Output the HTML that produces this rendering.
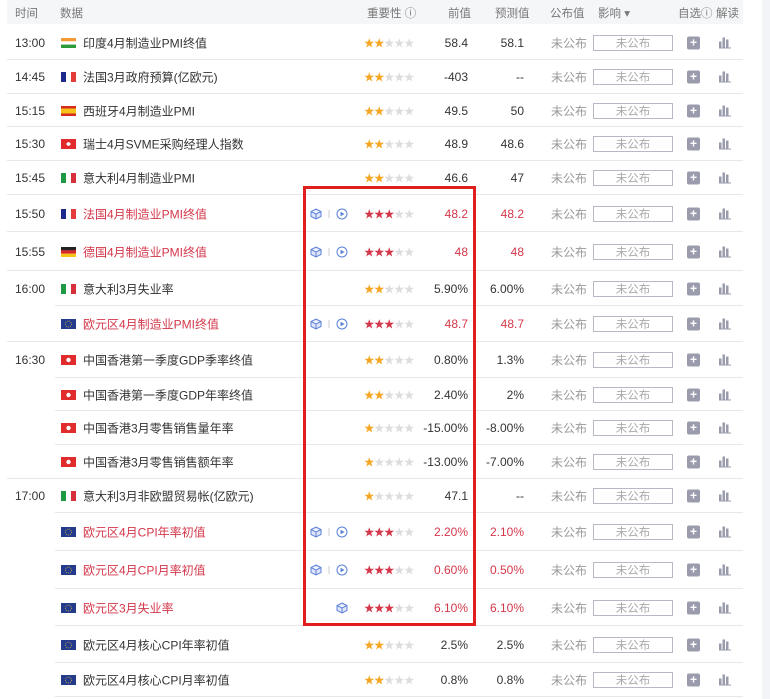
<!DOCTYPE html><html><head><meta charset="utf-8"><style>
*{margin:0;padding:0;box-sizing:border-box}
body{width:770px;height:699px;overflow:hidden;background:#fff;font-family:"Liberation Sans","Noto Sans CJK SC",sans-serif;font-size:12px;color:#333;position:relative}
.strip{position:absolute;left:762px;top:0;width:8px;height:699px;background:#f3f4f7}
.hd{position:absolute;left:7px;top:0;width:736px;height:24px;background:#f5f6f8;color:#777;font-size:11.5px}
.hd span{position:absolute;top:5px}
.r{position:absolute;left:0;width:743px}
.r .ln{position:absolute;bottom:0;right:0;height:1px;background:#e8e8ec}
.c{position:absolute;top:50%;transform:translateY(-50%);white-space:nowrap}
.t{left:15px}
.f{left:61px;width:15px;height:10px}
.n{left:83px}
.red{color:#d4374a}
.st{left:364px;font-size:10.5px;letter-spacing:-0.5px;color:#ddd}
.st b{font-weight:normal;color:#f5a623}
.st i{font-style:normal;color:#d4374a}
.p{right:275px;text-align:right}
.fc{right:219px;text-align:right}
.pub{left:551px;color:#999}
.bx{left:593px;width:80px;height:16px;border:1px solid #b8b9c4;color:#aaa;font-size:11.5px}
.bx span{position:absolute;left:0;right:0;top:2px;text-align:center;line-height:12px}
.pl{left:687px;width:13px;height:13px;background:#9a9cae;border-radius:2px;color:#fff;font-size:12px;line-height:13px;text-align:center;font-weight:bold}
.ch{left:719px;width:12px;height:11px}
.ic{left:310px;width:40px;height:12px}
.box{position:absolute;left:303px;top:186px;width:173px;height:440px;border:3px solid #e01e1e}
</style></head><body>
<div class="strip"></div>
<div class="hd"><span style="left:8px">时间</span><span style="left:53px">数据</span><span style="left:360px">重要性 ⓘ</span><span style="left:441px">前值</span><span style="left:488px">预测值</span><span style="left:543px">公布值</span><span style="left:591px">影响 ▾</span><span style="left:671px">自选ⓘ</span><span style="left:709px">解读</span></div>

<svg width="0" height="0" style="position:absolute"><defs>
<symbol id="ch" viewBox="0 0 12 11"><rect x="0" y="4" width="2.5" height="7" fill="#9a9cae"/><rect x="3.5" y="0" width="2.5" height="11" fill="#9a9cae"/><rect x="7" y="2" width="2.5" height="9" fill="#9a9cae"/><rect x="0" y="10" width="12" height="1" fill="#9a9cae"/></symbol>
<symbol id="ic" viewBox="0 0 40 12"><path d="M6 1 L11 3.5 V8.5 L6 11 L1 8.5 V3.5 Z M1 3.5 L6 6 L11 3.5 M6 6 V11" fill="#dfe6fb" stroke="#5b7fd8" stroke-width="1"/><line x1="19" y1="2" x2="19" y2="10" stroke="#ccc"/><circle cx="32" cy="6" r="5" fill="none" stroke="#5b7fd8"/><path d="M30.5 3.8 L34.5 6 L30.5 8.2Z" fill="#5b7fd8"/></symbol>
<symbol id="in" viewBox="0 0 15 10"><rect width="15" height="3.4" fill="#f39a35"/><rect y="3.3" width="15" height="3.4" fill="#fff"/><rect y="6.6" width="15" height="3.4" fill="#2e9a3a"/></symbol>
<symbol id="fr" viewBox="0 0 15 10"><rect width="5" height="10" fill="#1d2a8c"/><rect x="5" width="5" height="10" fill="#fff"/><rect x="10" width="5" height="10" fill="#e43b3b"/></symbol>
<symbol id="es" viewBox="0 0 15 10"><rect width="15" height="10" fill="#d52b1e"/><rect y="2.5" width="15" height="5" fill="#f7c21b"/></symbol>
<symbol id="ch2" viewBox="0 0 15 10"><rect width="15" height="10" fill="#e02c2c"/><path d="M6.5 3H8.5V4H9.5V6H8.5V7H6.5V6H5.5V4H6.5Z" fill="#fff"/></symbol>
<symbol id="it" viewBox="0 0 15 10"><rect width="5" height="10" fill="#1f9a44"/><rect x="5" width="5" height="10" fill="#fff"/><rect x="10" width="5" height="10" fill="#d8303a"/></symbol>
<symbol id="de" viewBox="0 0 15 10"><rect width="15" height="3.4" fill="#222"/><rect y="3.3" width="15" height="3.4" fill="#d8262d"/><rect y="6.6" width="15" height="3.4" fill="#f5c518"/></symbol>
<symbol id="eu" viewBox="0 0 15 10"><rect width="15" height="10" fill="#243a8c"/><circle cx="7.5" cy="5" r="3" fill="none" stroke="#e8c33a" stroke-width=".7" stroke-dasharray="1 1"/></symbol>
<symbol id="hk" viewBox="0 0 15 10"><rect width="15" height="10" fill="#e02c2c"/><circle cx="7.5" cy="5" r="2.2" fill="#fff"/></symbol>
</defs></svg>

<div class="r" style="top:26px;height:34px"><span class="c t">13:00</span><svg class="c f"><use href="#in"/></svg><span class="c n">印度4月制造业PMI终值</span><span class="c st"><b>★★</b>★★★</span><span class="c p">58.4</span><span class="c fc">58.1</span><span class="c pub">未公布</span><span class="c bx"><span>未公布</span></span><span class="c pl">+</span><svg class="c ch"><use href="#ch"/></svg><div class="ln" style="left:7px"></div></div>
<div class="r" style="top:60px;height:34px"><span class="c t">14:45</span><svg class="c f"><use href="#fr"/></svg><span class="c n">法国3月政府预算(亿欧元)</span><span class="c st"><b>★★</b>★★★</span><span class="c p">-403</span><span class="c fc">--</span><span class="c pub">未公布</span><span class="c bx"><span>未公布</span></span><span class="c pl">+</span><svg class="c ch"><use href="#ch"/></svg><div class="ln" style="left:7px"></div></div>
<div class="r" style="top:94px;height:33px"><span class="c t">15:15</span><svg class="c f"><use href="#es"/></svg><span class="c n">西班牙4月制造业PMI</span><span class="c st"><b>★★</b>★★★</span><span class="c p">49.5</span><span class="c fc">50</span><span class="c pub">未公布</span><span class="c bx"><span>未公布</span></span><span class="c pl">+</span><svg class="c ch"><use href="#ch"/></svg><div class="ln" style="left:7px"></div></div>
<div class="r" style="top:127px;height:34px"><span class="c t">15:30</span><svg class="c f"><use href="#ch2"/></svg><span class="c n">瑞士4月SVME采购经理人指数</span><span class="c st"><b>★★</b>★★★</span><span class="c p">48.9</span><span class="c fc">48.6</span><span class="c pub">未公布</span><span class="c bx"><span>未公布</span></span><span class="c pl">+</span><svg class="c ch"><use href="#ch"/></svg><div class="ln" style="left:7px"></div></div>
<div class="r" style="top:161px;height:34px"><span class="c t">15:45</span><svg class="c f"><use href="#it"/></svg><span class="c n">意大利4月制造业PMI</span><span class="c st"><b>★★</b>★★★</span><span class="c p">46.6</span><span class="c fc">47</span><span class="c pub">未公布</span><span class="c bx"><span>未公布</span></span><span class="c pl">+</span><svg class="c ch"><use href="#ch"/></svg><div class="ln" style="left:7px"></div></div>
<div class="r" style="top:195px;height:37px"><span class="c t">15:50</span><svg class="c f"><use href="#fr"/></svg><span class="c n red">法国4月制造业PMI终值</span><svg class="c ic"><use href="#ic"/></svg><span class="c st"><i>★★★</i>★★</span><span class="c p red">48.2</span><span class="c fc red">48.2</span><span class="c pub">未公布</span><span class="c bx"><span>未公布</span></span><span class="c pl">+</span><svg class="c ch"><use href="#ch"/></svg><div class="ln" style="left:7px"></div></div>
<div class="r" style="top:232px;height:39px"><span class="c t">15:55</span><svg class="c f"><use href="#de"/></svg><span class="c n red">德国4月制造业PMI终值</span><svg class="c ic"><use href="#ic"/></svg><span class="c st"><i>★★★</i>★★</span><span class="c p red">48</span><span class="c fc red">48</span><span class="c pub">未公布</span><span class="c bx"><span>未公布</span></span><span class="c pl">+</span><svg class="c ch"><use href="#ch"/></svg><div class="ln" style="left:7px"></div></div>
<div class="r" style="top:271px;height:35px"><span class="c t">16:00</span><svg class="c f"><use href="#it"/></svg><span class="c n">意大利3月失业率</span><span class="c st"><b>★★</b>★★★</span><span class="c p">5.90%</span><span class="c fc">6.00%</span><span class="c pub">未公布</span><span class="c bx"><span>未公布</span></span><span class="c pl">+</span><svg class="c ch"><use href="#ch"/></svg><div class="ln" style="left:55px"></div></div>
<div class="r" style="top:306px;height:36px"><svg class="c f"><use href="#eu"/></svg><span class="c n red">欧元区4月制造业PMI终值</span><svg class="c ic"><use href="#ic"/></svg><span class="c st"><i>★★★</i>★★</span><span class="c p red">48.7</span><span class="c fc red">48.7</span><span class="c pub">未公布</span><span class="c bx"><span>未公布</span></span><span class="c pl">+</span><svg class="c ch"><use href="#ch"/></svg><div class="ln" style="left:7px"></div></div>
<div class="r" style="top:342px;height:36px"><span class="c t">16:30</span><svg class="c f"><use href="#hk"/></svg><span class="c n">中国香港第一季度GDP季率终值</span><span class="c st"><b>★★</b>★★★</span><span class="c p">0.80%</span><span class="c fc">1.3%</span><span class="c pub">未公布</span><span class="c bx"><span>未公布</span></span><span class="c pl">+</span><svg class="c ch"><use href="#ch"/></svg><div class="ln" style="left:55px"></div></div>
<div class="r" style="top:378px;height:33px"><svg class="c f"><use href="#hk"/></svg><span class="c n">中国香港第一季度GDP年率终值</span><span class="c st"><b>★★</b>★★★</span><span class="c p">2.40%</span><span class="c fc">2%</span><span class="c pub">未公布</span><span class="c bx"><span>未公布</span></span><span class="c pl">+</span><svg class="c ch"><use href="#ch"/></svg><div class="ln" style="left:55px"></div></div>
<div class="r" style="top:411px;height:34px"><svg class="c f"><use href="#hk"/></svg><span class="c n">中国香港3月零售销售量年率</span><span class="c st"><b>★</b>★★★★</span><span class="c p">-15.00%</span><span class="c fc">-8.00%</span><span class="c pub">未公布</span><span class="c bx"><span>未公布</span></span><span class="c pl">+</span><svg class="c ch"><use href="#ch"/></svg><div class="ln" style="left:55px"></div></div>
<div class="r" style="top:445px;height:34px"><svg class="c f"><use href="#hk"/></svg><span class="c n">中国香港3月零售销售额年率</span><span class="c st"><b>★</b>★★★★</span><span class="c p">-13.00%</span><span class="c fc">-7.00%</span><span class="c pub">未公布</span><span class="c bx"><span>未公布</span></span><span class="c pl">+</span><svg class="c ch"><use href="#ch"/></svg><div class="ln" style="left:7px"></div></div>
<div class="r" style="top:479px;height:34px"><span class="c t">17:00</span><svg class="c f"><use href="#it"/></svg><span class="c n">意大利3月非欧盟贸易帐(亿欧元)</span><span class="c st"><b>★</b>★★★★</span><span class="c p">47.1</span><span class="c fc">--</span><span class="c pub">未公布</span><span class="c bx"><span>未公布</span></span><span class="c pl">+</span><svg class="c ch"><use href="#ch"/></svg><div class="ln" style="left:55px"></div></div>
<div class="r" style="top:513px;height:38px"><svg class="c f"><use href="#eu"/></svg><span class="c n red">欧元区4月CPI年率初值</span><svg class="c ic"><use href="#ic"/></svg><span class="c st"><i>★★★</i>★★</span><span class="c p red">2.20%</span><span class="c fc red">2.10%</span><span class="c pub">未公布</span><span class="c bx"><span>未公布</span></span><span class="c pl">+</span><svg class="c ch"><use href="#ch"/></svg><div class="ln" style="left:55px"></div></div>
<div class="r" style="top:551px;height:38px"><svg class="c f"><use href="#eu"/></svg><span class="c n red">欧元区4月CPI月率初值</span><svg class="c ic"><use href="#ic"/></svg><span class="c st"><i>★★★</i>★★</span><span class="c p red">0.60%</span><span class="c fc red">0.50%</span><span class="c pub">未公布</span><span class="c bx"><span>未公布</span></span><span class="c pl">+</span><svg class="c ch"><use href="#ch"/></svg><div class="ln" style="left:55px"></div></div>
<div class="r" style="top:589px;height:37px"><svg class="c f"><use href="#eu"/></svg><span class="c n red">欧元区3月失业率</span><svg class="c" style="left:336px;width:12px;height:12px" viewBox="0 0 12 12"><path d="M6 1 L11 3.5 V8.5 L6 11 L1 8.5 V3.5 Z M1 3.5 L6 6 L11 3.5 M6 6 V11" fill="#dfe6fb" stroke="#5b7fd8" stroke-width="1"/></svg><span class="c st"><i>★★★</i>★★</span><span class="c p red">6.10%</span><span class="c fc red">6.10%</span><span class="c pub">未公布</span><span class="c bx"><span>未公布</span></span><span class="c pl">+</span><svg class="c ch"><use href="#ch"/></svg><div class="ln" style="left:55px"></div></div>
<div class="r" style="top:626px;height:37px"><svg class="c f"><use href="#eu"/></svg><span class="c n">欧元区4月核心CPI年率初值</span><span class="c st"><b>★★</b>★★★</span><span class="c p">2.5%</span><span class="c fc">2.5%</span><span class="c pub">未公布</span><span class="c bx"><span>未公布</span></span><span class="c pl">+</span><svg class="c ch"><use href="#ch"/></svg><div class="ln" style="left:55px"></div></div>
<div class="r" style="top:663px;height:34px"><svg class="c f"><use href="#eu"/></svg><span class="c n">欧元区4月核心CPI月率初值</span><span class="c st"><b>★★</b>★★★</span><span class="c p">0.8%</span><span class="c fc">0.8%</span><span class="c pub">未公布</span><span class="c bx"><span>未公布</span></span><span class="c pl">+</span><svg class="c ch"><use href="#ch"/></svg><div class="ln" style="left:55px"></div></div>

<div class="box"></div>
</body></html>
